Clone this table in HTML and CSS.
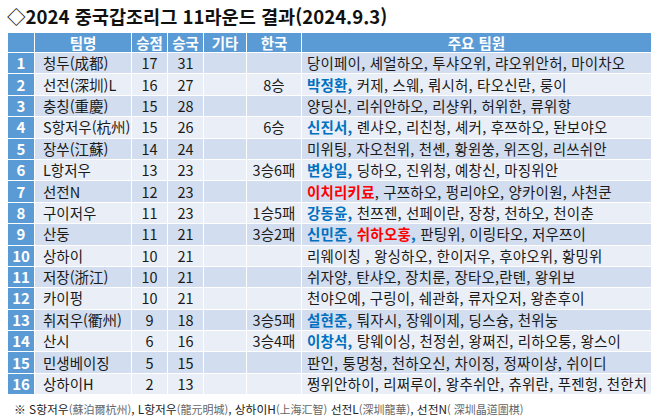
FILE: index.html
```html
<!DOCTYPE html>
<html lang="ko">
<head>
<meta charset="utf-8">
<link rel="stylesheet" href="styles.css">
</head>
<body>
<div class="title">◇2024 중국갑조리그 11라운드 결과(2024.9.3)</div>
<div class="tbl">
  <div class="row head">
    <div class="cell"></div><div class="cell">팀명</div><div class="cell">승점</div><div class="cell">승국</div><div class="cell">기타</div><div class="cell">한국</div><div class="cell">주요 팀원</div>
  </div>
  <div class="body">
    <div class="row"><div class="cell no">1</div><div class="cell team">청두(成都)</div><div class="cell">17</div><div class="cell">31</div><div class="cell"></div><div class="cell"></div><div class="cell mem"><span>당이페이, 셰얼하오, 투샤오위, 랴오위안허, 마이차오</span></div></div>
    <div class="row"><div class="cell no">2</div><div class="cell team">선전(深圳)L</div><div class="cell">16</div><div class="cell">27</div><div class="cell"></div><div class="cell">8승</div><div class="cell mem"><span><b class="kr">박정환,</b> 커제, 스웨, 뤄시허, 타오신란, 룽이</span></div></div>
    <div class="row"><div class="cell no">3</div><div class="cell team">충칭(重慶)</div><div class="cell">15</div><div class="cell">28</div><div class="cell"></div><div class="cell"></div><div class="cell mem"><span>양딩신, 리쉬안하오, 리샹위, 허위한, 류위항</span></div></div>
    <div class="row"><div class="cell no">4</div><div class="cell team">S항저우(杭州)</div><div class="cell">15</div><div class="cell">26</div><div class="cell"></div><div class="cell">6승</div><div class="cell mem"><span><b class="kr">신진서,</b> 롄샤오, 리친청, 셰커, 후쯔하오, 돤보야오</span></div></div>
    <div class="row"><div class="cell no">5</div><div class="cell team">장쑤(江蘇)</div><div class="cell">14</div><div class="cell">24</div><div class="cell"></div><div class="cell"></div><div class="cell mem"><span>미위팅, 자오천위, 천셴, 황윈쑹, 위즈잉, 리쓰쉬안</span></div></div>
    <div class="row"><div class="cell no">6</div><div class="cell team">L항저우</div><div class="cell">13</div><div class="cell">23</div><div class="cell"></div><div class="cell">3승6패</div><div class="cell mem"><span><b class="kr">변상일,</b> 딩하오, 진위청, 예창신, 마징위안</span></div></div>
    <div class="row"><div class="cell no">7</div><div class="cell team">선전N</div><div class="cell">12</div><div class="cell">23</div><div class="cell"></div><div class="cell"></div><div class="cell mem"><span><b class="jp">이치리키료</b>, 구쯔하오, 펑리야오, 양카이원, 샤천쿤</span></div></div>
    <div class="row"><div class="cell no">8</div><div class="cell team">구이저우</div><div class="cell">11</div><div class="cell">23</div><div class="cell"></div><div class="cell">1승5패</div><div class="cell mem"><span><b class="kr">강동윤,</b> 천쯔젠, 선페이란, 장창, 천하오, 천이춘</span></div></div>
    <div class="row"><div class="cell no">9</div><div class="cell team">산둥</div><div class="cell">11</div><div class="cell">21</div><div class="cell"></div><div class="cell">3승2패</div><div class="cell mem"><span><b class="kr">신민준, <span class="jp">쉬하오훙</span>,</b> 판팅위, 이링타오, 저우쯔이</span></div></div>
    <div class="row"><div class="cell no">10</div><div class="cell team">상하이</div><div class="cell">10</div><div class="cell">21</div><div class="cell"></div><div class="cell"></div><div class="cell mem"><span>리웨이칭 , 왕싱하오, 한이저우, 후야오위, 황밍위</span></div></div>
    <div class="row"><div class="cell no">11</div><div class="cell team">저장(浙江)</div><div class="cell">10</div><div class="cell">21</div><div class="cell"></div><div class="cell"></div><div class="cell mem"><span>쉬자양, 탄샤오, 장치룬, 장타오,란톈, 왕위보</span></div></div>
    <div class="row"><div class="cell no">12</div><div class="cell team">카이펑</div><div class="cell">10</div><div class="cell">21</div><div class="cell"></div><div class="cell"></div><div class="cell mem"><span>천야오예, 구링이, 쉐관화, 류자오저, 왕춘후이</span></div></div>
    <div class="row"><div class="cell no">13</div><div class="cell team">취저우(衢州)</div><div class="cell">9</div><div class="cell">18</div><div class="cell"></div><div class="cell">3승5패</div><div class="cell mem"><span><b class="kr">설현준,</b> 퉈자시, 장웨이제, 딩스슝, 천위눙</span></div></div>
    <div class="row"><div class="cell no">14</div><div class="cell team">산시</div><div class="cell">6</div><div class="cell">16</div><div class="cell"></div><div class="cell">3승4패</div><div class="cell mem"><span><b class="kr">이창석,</b> 탕웨이싱, 천정쉰, 왕쩌진, 리하오퉁, 왕스이</span></div></div>
    <div class="row"><div class="cell no">15</div><div class="cell team">민생베이징</div><div class="cell">5</div><div class="cell">15</div><div class="cell"></div><div class="cell"></div><div class="cell mem"><span>판인, 퉁멍청, 천하오신, 차이징, 정짜이샹, 쉬이디</span></div></div>
    <div class="row"><div class="cell no">16</div><div class="cell team">상하이H</div><div class="cell">2</div><div class="cell">13</div><div class="cell"></div><div class="cell"></div><div class="cell mem"><span>쩡위안하이, 리쩌루이, 왕추쉬안, 츄위란, 푸젠헝, 천한치</span></div></div>
  </div>
</div>
<div class="note">※ S항저우<span class="hz">(蘇泊爾杭州)</span>, L항저우<span class="hz">(龍元明城)</span>, 상하이H<span class="hz">(上海汇智)</span> 선전L<span class="hz">(深圳龍華)</span>, 선전N<span class="hz">( 深圳晶道圍棋)</span></div>
</body>
</html>
```
FILE: styles.css
```css
html, body {
  margin: 0;
  padding: 0;
  background: #ffffff;
}
body {
  width: 660px;
  height: 417px;
  overflow: hidden;
  font-family: "Noto Sans CJK KR", "Noto Sans", sans-serif;
  color: #1a1a1a;
}
.title {
  height: 33px;
  line-height: 32px;
  padding-left: 7px;
  font-size: 18.6px;
  font-weight: bold;
  color: #111;
  white-space: nowrap;
}
.tbl {
  margin-left: 8px;
  width: 643px;
  display: flex;
  flex-direction: column;
  row-gap: 1px;
  font-size: 14.5px;
}
.body {
  display: flex;
  flex-direction: column;
  row-gap: 1px;
}
.row {
  display: grid;
  grid-template-columns: 26px 96px 35px 35px 42px 54px 349px;
  column-gap: 1px;
  height: 20.4px;
}
.row.head {
  height: 19px;
}
.cell {
  display: flex;
  align-items: center;
  justify-content: center;
  white-space: nowrap;
  overflow: hidden;
  line-height: 18px;
}
.head .cell {
  background: #5b9bd5;
  color: #ffffff;
  font-weight: bold;
  font-size: 14.5px;
}
.body .row:nth-child(odd) .cell { background: #d2deef; }
.body .row:nth-child(even) .cell { background: #eaeff7; }
.body .row .cell.no {
  background: #5b9bd5;
  color: #ffffff;
  font-weight: bold;
  font-size: 15px;
}
.cell.team {
  justify-content: flex-start;
  padding-left: 8px;
}
.cell.mem {
  justify-content: flex-start;
  padding-left: 5px;
  letter-spacing: 0.2px;
}
.kr { color: #0070c0; font-weight: bold; }
.jp { color: #ff0000; font-weight: bold; }
.note {
  padding-left: 14px;
  margin-top: 7px;
  font-size: 11.8px;
  line-height: 16px;
  color: #222;
  white-space: nowrap;
}
.hz {
  font-family: "Noto Sans CJK TC", sans-serif;
  color: #666;
  font-size: 11px;
}
```
